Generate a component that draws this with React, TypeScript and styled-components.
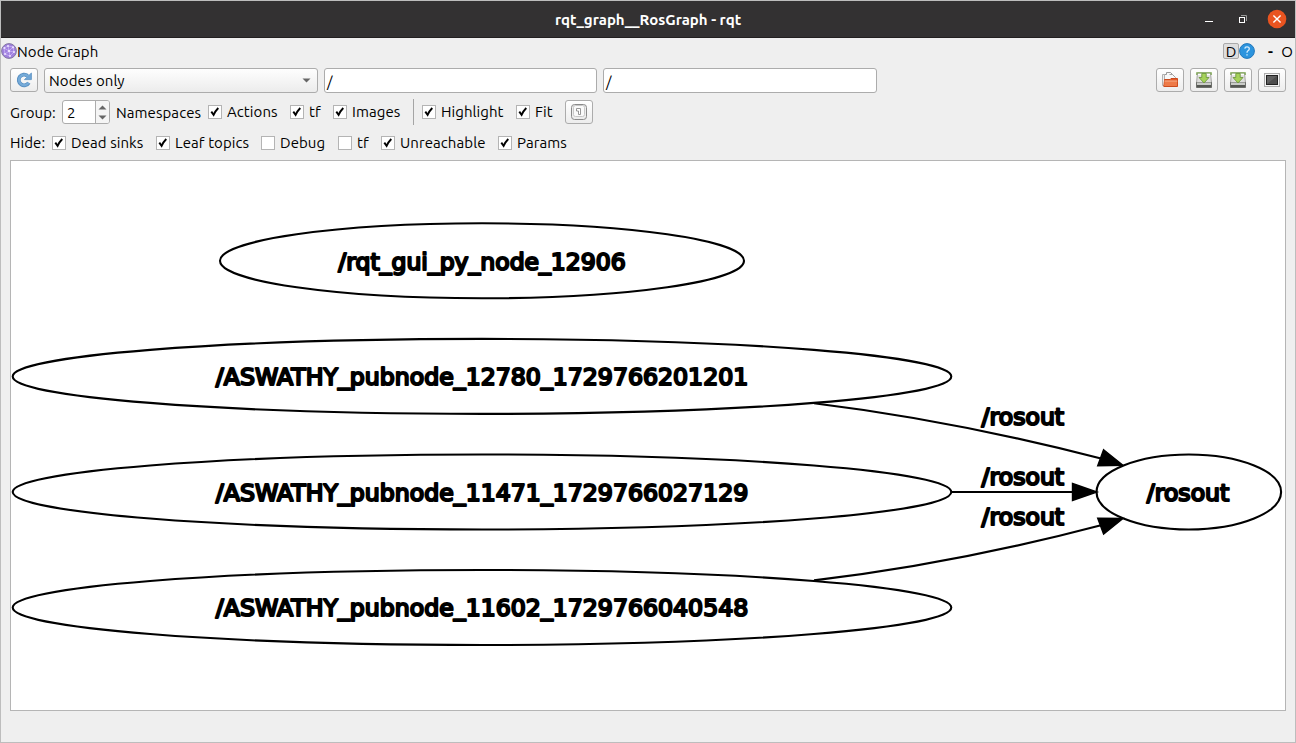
import React from "react";
import styled, { createGlobalStyle } from "styled-components";

const Global = createGlobalStyle`
  *, *::before, *::after { box-sizing: border-box; }
  body { margin: 0; background: #efefef; overflow: hidden; }
`;

const Window = styled.div`
  width: 1296px;
  height: 743px;
  display: flex;
  flex-direction: column;
  border: 1px solid #bdbdbd;
  background: #efefef;
  color: #000;
  font: 15px/20px "Ubuntu", "Noto Sans", sans-serif;
  letter-spacing: 0.07px;
  white-space: nowrap;
`;

const TitleBar = styled.header`
  height: 37px;
  flex: none;
  display: grid;
  grid-template-columns: 1fr auto 1fr;
  align-items: center;
  background: #333132;
  border-bottom: 1px solid #221f20;
  color: #fff;
`;

const Title = styled.h1`
  grid-column: 2;
  margin: 0;
  padding-top: 1px;
  font-size: 15px;
  line-height: 20px;
  font-weight: 700;
  letter-spacing: 0;
`;

const WindowButtons = styled.div`
  justify-self: end;
  height: 36px;
  display: flex;
`;

const DockBar = styled.div`
  height: 26px;
  flex: none;
  display: flex;
  align-items: center;
`;

const DockTitle = styled.span`
  flex: 1;
  padding-top: 2px;
`;

const DockButton = styled.span`
  width: 16px;
  height: 16px;
  border: 1px solid #aaa;
  border-radius: 2px;
  background: #dedede;
  text-align: center;
  line-height: 16px;
`;

const DockGlyph = styled.span<{ $w: number; $bold?: boolean }>`
  width: ${(p) => p.$w}px;
  padding-top: 2px;
  text-align: right;
  font-weight: ${(p) => (p.$bold ? 700 : 400)};
`;

const Row = styled.div<{ $h: number; $lift?: number }>`
  height: ${(p) => p.$h}px;
  flex: none;
  display: flex;
  align-items: center;
  padding: 0 9px ${(p) => p.$lift ?? 0}px;
`;

const ToolButton = styled.button<{ $gap?: number }>`
  width: 28px;
  height: 24px;
  padding: 0;
  margin: 0 ${(p) => p.$gap ?? 0}px 0 0;
  display: flex;
  align-items: center;
  justify-content: center;
  border: 1px solid #acacac;
  border-radius: 3px;
  background: linear-gradient(#fff, #ededed);
`;

const Combo = styled.div`
  width: 274px;
  height: 25px;
  margin-right: 6px;
  padding: 1px 6px 0 4px;
  display: flex;
  align-items: center;
  justify-content: space-between;
  border: 1px solid #acacac;
  border-radius: 3px;
  background: linear-gradient(#fefefe, #ececec);
`;

const Field = styled.div<{ $w: number; $gap: number }>`
  width: ${(p) => p.$w}px;
  height: 25px;
  margin-right: ${(p) => p.$gap}px;
  padding: 0 2px;
  border: 1px solid #acacac;
  border-radius: 3px;
  background: #fff;
  line-height: 25px;
  font-size: 15px;
`;

const Spacer = styled.div`
  flex: 1;
`;

const Caption = styled.span<{ $w: number }>`
  width: ${(p) => p.$w}px;
  flex: none;
  padding-top: 1px;
`;

const Spin = styled.div`
  width: 48px;
  height: 24px;
  margin-right: 6px;
  display: flex;
  border: 1px solid #acacac;
  border-radius: 3px;
  background: #fff;
  overflow: hidden;
`;

const SpinValue = styled.span`
  flex: 1;
  padding-left: 4px;
  line-height: 24px;
`;

const SpinArrows = styled.span`
  width: 14px;
  border-left: 1px solid #acacac;
  background: #f5f5f5;
  display: flex;
`;

const CheckItem = styled.label<{ $w: number }>`
  width: ${(p) => p.$w}px;
  flex: none;
  display: flex;
  align-items: center;
  gap: 5px;
`;

const Box = styled.span`
  width: 14px;
  height: 14px;
  flex: none;
  display: flex;
  border: 1px solid #b4b4b4;
  background: #fff;
`;

const Divider = styled.span`
  width: 9px;
  height: 26px;
  border-left: 1px solid #a5a5a5;
`;

const Canvas = styled.main`
  width: 1276px;
  height: 551px;
  flex: none;
  margin-left: 9px;
  border: 1px solid #b5b5b5;
  background: #fff;
  letter-spacing: 0;

  svg { display: block; }
`;

const NodeText = styled.text`
  font: 23.6px "DejaVu Sans", sans-serif;
  fill: #000;
  stroke: #000;
  stroke-width: 2.1px;
  stroke-linejoin: round;
`;

interface CheckProps {
  label: string;
  w: number;
  on?: boolean;
}

function Check({ label, w, on = true }: CheckProps) {
  return (
    <CheckItem $w={w}>
      <Box>
        {on && (
          <svg width="12" height="12" viewBox="0 0 12 12">
            <path d="M2.3 5.6L4.6 8.9Q6.3 5 9.3 2" fill="none" stroke="#000" strokeWidth="1.9" />
          </svg>
        )}
      </Box>
      {label}
    </CheckItem>
  );
}

function GraphIcon() {
  return (
    <svg width="16" height="18" viewBox="0 0 16 18">
      <circle cx="8" cy="9" r="7.4" fill="#a080df" stroke="#8379a0" />
      <path d="M3 6L7 4L12 5L13 10L9 14L4 12L3 6L8 9L12 5M8 9L9 14M8 9L13 10M8 9L4 12M7 4L8 9" fill="none" stroke="#c9b3f4" strokeWidth=".8" />
      <g fill="#eee4ff">
        <circle cx="3.4" cy="6" r="1" /><circle cx="7" cy="4" r="1" /><circle cx="12" cy="5.3" r="1.1" />
        <circle cx="8" cy="9" r="1.2" /><circle cx="4" cy="12" r="1" /><circle cx="9" cy="14" r="1" /><circle cx="13" cy="10" r="1" />
      </g>
    </svg>
  );
}

function RefreshIcon() {
  return (
    <svg width="16" height="16" viewBox="0 0 16 16">
      <path d="M12.8 10.7A5.4 5.4 0 1 1 11.6 3.8" fill="none" stroke="#5a90c2" strokeWidth="3.8" />
      <path d="M15.4 1V7.6H8.5L10.8 5.3L9.2 3.7L12.8 3.5Z" fill="#6fa6d6" stroke="#5a90c2" strokeWidth=".8" />
      <path d="M12.5 10.8A5.2 5.2 0 1 1 11.8 4.2" fill="none" stroke="#75abd9" strokeWidth="2.2" />
    </svg>
  );
}

function HelpIcon() {
  return (
    <svg width="16" height="16" viewBox="0 0 16 16">
      <circle cx="8" cy="8" r="7.4" fill="#2c94de" stroke="#2378bb" />
      <path d="M5.8 5.6Q6 3.8 8 3.8Q10.3 3.8 10.3 5.8Q10.3 7 9 7.8Q8 8.5 8 9.8M8 11.3V12.6" fill="none" stroke="#d9efff" strokeWidth="1.3" />
    </svg>
  );
}

function FolderIcon() {
  return (
    <svg width="18" height="16" viewBox="0 0 18 16">
      <path d="M3.5 13V2.5H5.5V.5H9.5L12.5 3.5V7" fill="#f8f8f8" stroke="#999" />
      <path d="M8.5 2.5H11.5L14.5 5.5V8" fill="#f8f8f8" stroke="#a5a5a5" />
      <path d="M1.5 2.5V13.5H3.5V2.5Z" fill="#eee" stroke="#b0b0b0" />
      <path d="M3.5 8.5V7.5H9L10 6.5H16.5V14.5H2.8Z" fill="#e35a28" stroke="#cc4b1d" />
      <path d="M3.5 9H16.2L15.9 14H3.2Z" fill="#ee7a48" />
      <path d="M3.6 9H16.2" stroke="#f7b28e" />
    </svg>
  );
}

function SaveIcon() {
  return (
    <svg width="16" height="16" viewBox="0 0 16 16">
      <path d="M1.5 1H14.5L15.5 11H.5Z" fill="#dededc" stroke="#a4a4a2" />
      <path d="M.8 3V.8H15.2V3" fill="none" stroke="#7da653" strokeWidth="1.2" />
      <path d="M2 2.5H14" stroke="#fff" strokeWidth="1.4" />
      <path d="M.5 10.5H15.5V15.5H.5Z" fill="#555753" stroke="#6c6e6a" />
      <path d="M1 10.5H15V13H1Z" fill="#c9cbc7" />
      <path d="M5.8 1.5H10.2V5.5H13L8 11L3 5.5H5.8Z" fill="#a5d25a" stroke="#6f9a3e" strokeWidth=".9" />
    </svg>
  );
}

function ScreenIcon() {
  return (
    <svg width="16" height="14" viewBox="0 0 16 14">
      <rect x=".5" y=".5" width="15" height="13" fill="#f4f4f4" stroke="#acacac" />
      <rect x="2.5" y="2.5" width="11" height="9" fill="#4d4d4d" stroke="#222" />
      <path d="M3 11V3H13Z" fill="#747474" opacity=".5" />
    </svg>
  );
}

function FitIcon() {
  return (
    <svg width="16" height="16" viewBox="0 0 16 16">
      <rect x=".5" y=".5" width="15" height="15" rx="3" fill="#ededed" stroke="#8a8a8a" />
      <rect x="2.5" y="1.5" width="11" height="11" rx="2" fill="#fafafa" stroke="#c8c8c8" />
      <path d="M5.5 4.5H9.5V10.5H7.5V7H5.5Z" fill="#fff" stroke="#8c8c8c" strokeWidth=".9" />
    </svg>
  );
}

const nodes = [
  { label: "/rqt_gui_py_node_12906", cx: 482, textX: 338.3, cy: 260.8, rx: 262, len: 287.5 },
  { label: "/ASWATHY_pubnode_12780_1729766201201", cx: 482, textX: 215.8, cy: 376.4, rx: 469.3, len: 532.5 },
  { label: "/ASWATHY_pubnode_11471_1729766027129", cx: 482, textX: 215.8, cy: 492, rx: 469.3, len: 532.5 },
  { label: "/ASWATHY_pubnode_11602_1729766040548", cx: 482, textX: 215.8, cy: 607.5, rx: 469.3, len: 532.5 },
  { label: "/rosout", cx: 1188.8, textX: 1146.8, cy: 492, rx: 92.3, len: 82.5 },
];

const edges = [
  { line: "M814 403.2C910 415 1010 435 1101 458.5", head: "1103.6,449.7 1123,465.3 1097.7,465.7", y: 424.7 },
  { line: "M951.5 492H1073", head: "1072.5,483.5 1097,492 1072.5,500.5", y: 484.8 },
  { line: "M814 580.4C910 569 1010 549.2 1101 525.2", head: "1097.7,518.3 1123,518.5 1103.6,534", y: 525.4 },
];

function Graph() {
  return (
    <svg width="1274" height="549" viewBox="11 161 1274 549">
      {edges.map((e) => (
        <g key={e.y}>
          <path d={e.line} fill="none" stroke="#000" strokeWidth="2.1" />
          <polygon points={e.head} stroke="#000" strokeWidth="1.4" />
          <NodeText x="981.6" y={e.y} textLength="82.5" lengthAdjust="spacingAndGlyphs">/rosout</NodeText>
        </g>
      ))}
      {nodes.map((n) => (
        <g key={n.label}>
          <ellipse cx={n.cx} cy={n.cy} rx={n.rx} ry={37.5} fill="none" stroke="#000" strokeWidth="2.1" />
          <NodeText x={n.textX} y={n.cy + 8.7} textLength={n.len} lengthAdjust="spacingAndGlyphs">
            {n.label}
          </NodeText>
        </g>
      ))}
    </svg>
  );
}

export default function App() {
  return (
    <>
      <Global />
      <Window>
        <TitleBar>
          <Title>rqt_graph__RosGraph - rqt</Title>
          <WindowButtons>
            <svg width="96" height="36" viewBox="1199 1 96 36">
              <path d="M1205 21.5H1213" stroke="#fff" />
              <path d="M1241 15.5H1246.5V21" fill="none" stroke="#999" />
              <rect x="1239.5" y="17.5" width="5" height="5" fill="none" stroke="#fff" />
              <circle cx="1277" cy="19" r="9.3" fill="#e95420" />
              <path d="M1273.4 15.4L1280.6 22.6M1280.6 15.4L1273.4 22.6" stroke="#fff" strokeWidth="1.4" />
            </svg>
          </WindowButtons>
        </TitleBar>
        <DockBar>
          <GraphIcon />
          <DockTitle>Node Graph</DockTitle>
          <DockButton>D</DockButton>
          <HelpIcon />
          <DockGlyph $w={18} $bold>-</DockGlyph>
          <DockGlyph $w={20}>O</DockGlyph>
          <DockGlyph $w={2} />
        </DockBar>
        <Row $h={32}>
          <ToolButton $gap={6}><RefreshIcon /></ToolButton>
          <Combo>
            Nodes only
            <svg width="9" height="5" viewBox="0 0 9 5"><path d="M.5 .5H8.5L4.5 4.5Z" fill="#666" /></svg>
          </Combo>
          <Field $w={273} $gap={6}>/</Field>
          <Field $w={274} $gap={5}>/</Field>
          <Spacer />
          <ToolButton $gap={6}><FolderIcon /></ToolButton>
          <ToolButton $gap={6}><SaveIcon /></ToolButton>
          <ToolButton $gap={6}><SaveIcon /></ToolButton>
          <ToolButton><ScreenIcon /></ToolButton>
        </Row>
        <Row $h={32}>
          <Caption $w={52}>Group:</Caption>
          <Spin>
            <SpinValue>2</SpinValue>
            <SpinArrows>
              <svg width="13" height="22" viewBox="0 0 13 22">
                <path d="M2.5 8.5H10.5L6.5 4.5ZM2.5 14.5H10.5L6.5 18.5Z" fill="#666" />
              </svg>
            </SpinArrows>
          </Spin>
          <Caption $w={92}>Namespaces</Caption>
          <Check label="Actions" w={82} />
          <Check label="tf" w={43} />
          <Check label="Images" w={80} />
          <Divider />
          <Check label="Highlight" w={94} />
          <Check label="Fit" w={49} />
          <ToolButton><FitIcon /></ToolButton>
        </Row>
        <Row $h={32} $lift={3}>
          <Caption $w={42}>Hide:</Caption>
          <Check label="Dead sinks" w={104} />
          <Check label="Leaf topics" w={105} />
          <Check label="Debug" w={77} on={false} />
          <Check label="tf" w={43} on={false} />
          <Check label="Unreachable" w={117} />
          <Check label="Params" w={80} />
        </Row>
        <Canvas><Graph /></Canvas>
      </Window>
    </>
  );
}
